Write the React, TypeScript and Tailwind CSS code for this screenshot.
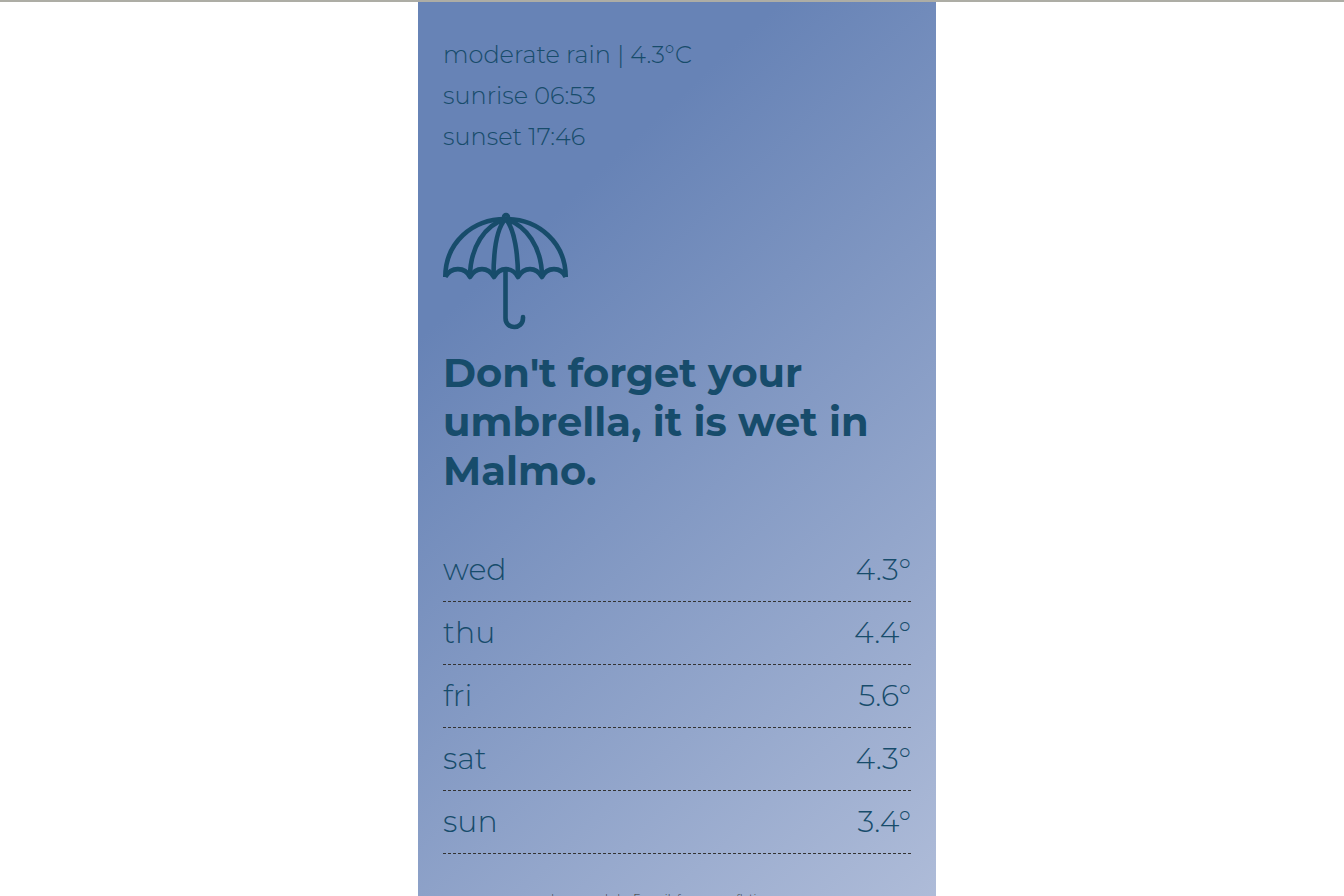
const forecast = [
  { day: "wed", temp: "4.3°" },
  { day: "thu", temp: "4.4°" },
  { day: "fri", temp: "5.6°" },
  { day: "sat", temp: "4.3°" },
  { day: "sun", temp: "3.4°" },
];

function Umbrella() {
  return (
    <svg
      viewBox="0 0 126 126"
      className="block size-[126px]"
      fill="none"
      stroke="currentColor"
      strokeWidth="4.6"
      strokeLinejoin="round"
      role="img"
      aria-label="Umbrella"
    >
      <path d="M2.300 70C2.300 36 29 12 62.500 12S122.700 36 122.700 70" />
      <path d="M2.300 70C8 59.500 22 59.500 27 70C33 59.500 45 59.500 51 70C57 59.500 69 59.500 75 70C81 59.500 93 59.500 99 70C104 59.500 118 59.500 122.700 70" />
      <path d="M62.500 12C42 18 27 40 27 70M62.500 12C53 22 50.500 49 50.500 70M62.500 12C72 22 75 49 75 70M62.500 12C83 18 99 40 99 70" />
      <path d="M62.500 63V111C62.500 123 80 123 80 111V110" strokeLinecap="round" />
      <circle cx="63" cy="10" r="1.900" />
    </svg>
  );
}

export default function App() {
  return (
    <div className="min-h-screen border-t-2 border-[#adada5] bg-white font-['Montserrat','Inter',sans-serif] text-[#174c6b] sm:pl-[10px]">
      <main className="mx-auto w-full max-w-[518px] bg-[linear-gradient(137deg,#6783b6_0%,#6783b6_24%,#b0bdd9_100%)] px-[25px] pt-8">
        <section className="text-[24px] leading-[41px] font-light">
          <p>moderate rain | 4.3°C</p>
          <p>sunrise 06:53</p>
          <p>sunset 17:46</p>
        </section>
        <section className="pt-[50px]">
          <Umbrella />
          <h1 className="pt-[15px] text-[40px] leading-[49px] font-bold">
            Don't forget your umbrella, it is wet in Malmo.
          </h1>
        </section>
        <dl className="mt-11 text-[30px] leading-[62px] font-light">
          {forecast.map((row) => (
            <div
              key={row.day}
              className="flex justify-between border-b border-dashed border-[#333]"
            >
              <dt>{row.day}</dt>
              <dd>{row.temp}</dd>
            </div>
          ))}
        </dl>
        <footer className="pt-9 pb-5 text-center text-[11px] leading-4 font-light text-[#333]">
          Icons made by Freepik from www.flaticon.com
        </footer>
      </main>
    </div>
  );
}
